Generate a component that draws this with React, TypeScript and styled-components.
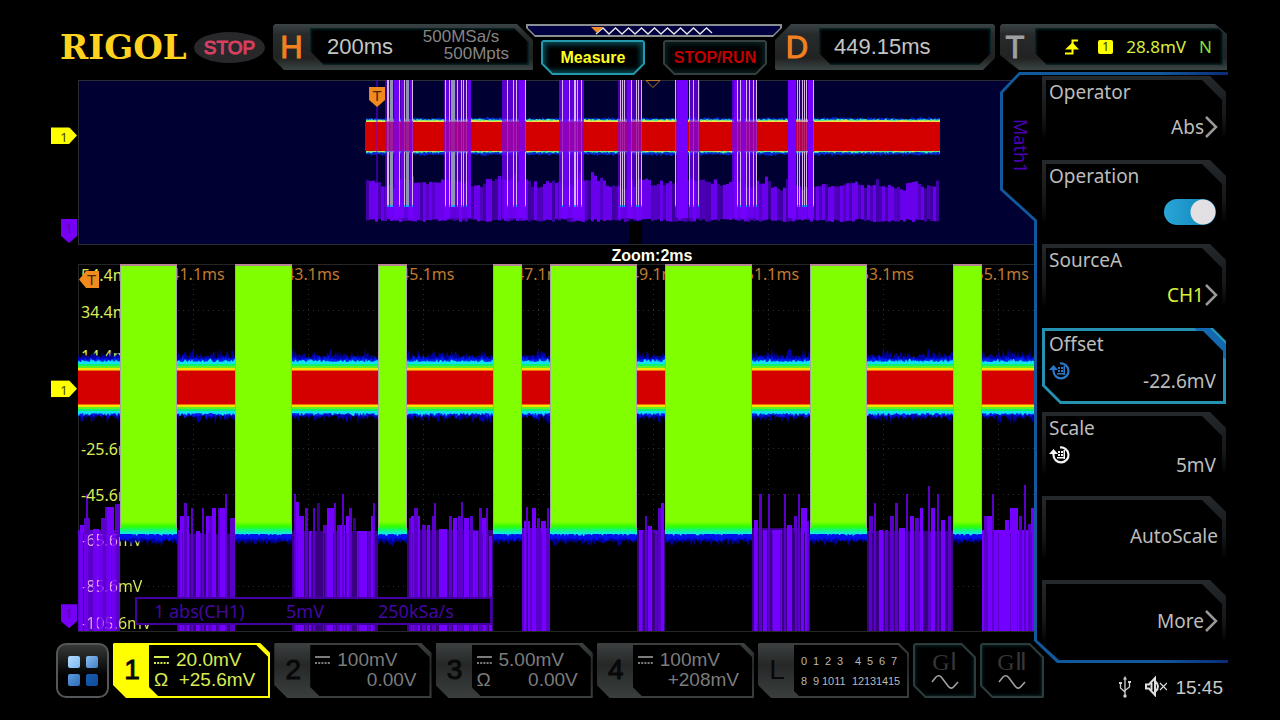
import React from "react";
import styled, { createGlobalStyle, css } from "styled-components";

const SANS = `"Liberation Sans", Arial, sans-serif`;
const HUMANIST = `"Noto Sans", "Open Sans", sans-serif`;

/* Octagonal clip with one cut length for each corner. */
const cut = (tl: number, tr: number, br: number, bl: number) =>
  `polygon(${tl}px 0, calc(100% - ${tr}px) 0, 100% ${tr}px, 100% calc(100% - ${br}px), calc(100% - ${br}px) 100%, ${bl}px 100%, 0 calc(100% - ${bl}px), 0 ${tl}px)`;

const GlobalStyle = createGlobalStyle`
  * { box-sizing: border-box; }
  body { margin: 0; background: #000; color: #c4c4c4; font-family: ${SANS}; }
  button { margin: 0; padding: 0; border: 0; background: none; color: inherit; font: inherit; cursor: pointer; }
  svg { display: block; }
`;

/* ---------- page ---------- */

const Screen = styled.div`
  min-height: 100vh;
  min-width: 1180px;
  display: flex;
  flex-direction: column;
  background: #000;
`;

const Header = styled.header`
  display: flex;
  align-items: flex-start;
  height: 72px;
  padding: 24px 53px 0 60px;
`;

const Logo = styled.div`
  flex: 0 0 134px;
  font: bold 34px/47px "DejaVu Serif", "Liberation Serif", serif;
  color: #ffd21f;
  white-space: nowrap;
`;

const RunState = styled.div`
  flex: 0 0 71px;
  height: 31px;
  margin: 8px 8px 0 0;
  border-radius: 50%;
  background: #28282b;
  color: #d84060;
  font-size: 19px;
  line-height: 32px;
  text-align: center;
  -webkit-text-stroke: 1px #d84060;
`;

/* ---------- header readouts ---------- */

const Readout = styled.section<{ $basis: number; $shape: string }>`
  flex: 1 1 ${(p) => p.$basis}px;
  display: flex;
  height: 46px;
  padding: 4px 4px 5px 0;
  clip-path: ${(p) => p.$shape};
  background: linear-gradient(180deg, #3a4346 0, #272b2c 10px, #222 34px, #3a4444 100%);
`;

const ReadoutKey = styled.div<{ $tone: string; $width: number }>`
  flex: 0 0 ${(p) => p.$width}px;
  color: ${(p) => p.$tone};
  font-size: 31px;
  line-height: 40px;
  text-align: center;
  -webkit-text-stroke: 1px ${(p) => p.$tone};
`;

const ReadoutFace = styled.div<{ $shape: string; $pad: string }>`
  flex: 1;
  display: flex;
  align-items: center;
  justify-content: space-between;
  padding: ${(p) => p.$pad};
  clip-path: ${(p) => p.$shape};
  background: #000;
  box-shadow: inset 0 0 3px 1px #0c3338;
`;

const BigValue = styled.span`
  font-size: 22px;
  line-height: 38px;
`;

const Acquisition = styled.div`
  color: #858585;
  font-size: 17px;
  line-height: 17px;
  margin-top: -3px;
  > div:last-child { padding-left: 21px; }
`;

const TriggerLevel = styled.span`
  font: 17px/36px ${HUMANIST};
  color: #d8f03c;
`;

const TriggerMode = styled(TriggerLevel)`
  color: #84e03c;
`;

const SourceBadge = styled.span`
  width: 15px;
  height: 14px;
  margin-left: 6px;
  border-radius: 2px;
  background: #ffff00;
  color: #333300;
  font: 12px/14px ${HUMANIST};
  text-align: center;
`;

const Middle = styled.div`
  flex: 0 0 256px;
  margin: 0 -7px;
  position: relative;
`;

const MemoryBar = styled.div`
  height: 13px;
  padding: 2px;
  clip-path: polygon(0 0, 100% 0, 100% 4px, calc(100% - 9px) 100%, 9px 100%, 0 4px);
  background: #8a8f92;
`;

const MemoryFill = styled.div`
  height: 9px;
  padding-left: 63px;
  clip-path: polygon(0 0, 100% 0, 100% 2px, calc(100% - 7px) 100%, 7px 100%, 0 2px);
  background: #000040;
`;

const MiddleButtons = styled.div`
  display: flex;
  gap: 18px;
  padding: 3px 15px 0;
`;

const KeyButton = styled.button<{ $on?: boolean }>`
  flex: 1;
  height: 35px;
  padding: 2px;
  clip-path: ${cut(2, 2, 11, 11)};
  background: ${(p) => (p.$on ? "#2299ac" : "#33403f")};
  color: ${(p) => (p.$on ? "#ffff20" : "#c00000")};
  font-size: 16px;
  font-weight: bold;
  > span {
    display: block;
    height: 31px;
    line-height: 31px;
    clip-path: ${cut(1, 1, 10, 10)};
    background: #000;
    box-shadow: inset 0 0 5px 3px ${(p) => (p.$on ? "#074650" : "#0a1c1e")};
  }
`;

/* ---------- body ---------- */

const Body = styled.main`
  flex: 1;
  display: flex;
  padding: 0 52px 0 78px;
`;

const Plots = styled.div`
  flex: 1;
  min-width: 0;
  display: flex;
  flex-direction: column;
  padding: 8px 0 22px;
`;

const Overview = styled.section`
  position: relative;
  height: 165px;
  border: solid #2c2c34;
  border-width: 1px 0 1px 1px;
  background: #000033;
`;

const ZoomTitle = styled.h2`
  margin: 0;
  padding-left: 192px;
  font-size: 16px;
  line-height: 21px;
  height: 19px;
  color: #fffff0;
  text-align: center;
`;

const ZoomPlot = styled.section`
  position: relative;
  flex: 1;
  min-height: 368px;
  border: solid #262626;
  border-width: 1px 0 1px 1px;
`;

const Layer = styled.svg`
  position: absolute;
  top: -1px;
  left: -1px;
  width: calc(100% + 1px);
  height: calc(100% + 2px);
`;

const LabelLayer = styled.div`
  position: absolute;
  inset: 0;
`;

const TimeLabel = styled.span`
  position: absolute;
  top: 0;
  transform: translateX(-50%);
  font: 16px/18px ${HUMANIST};
  color: #c07a30;
`;

const LevelLabel = styled.span<{ $covered?: boolean }>`
  position: absolute;
  left: 2px;
  transform: translateY(-50%);
  font: 16px/18px ${HUMANIST};
  color: #dcec58;
  ${(p) =>
    p.$covered &&
    css`
      background: linear-gradient(90deg, #e0a0f0 39px, #dcec58 39px);
      background-clip: text;
      -webkit-background-clip: text;
      color: transparent;
    `}
`;

const EdgeMarker = styled.div`
  position: absolute;
  transform: translateY(-50%);
`;

const ChannelMarker = styled(EdgeMarker)`
  left: -28px;
  width: 26px;
  height: 17px;
  clip-path: polygon(0 0, 18px 0, 100% 50%, 18px 100%, 0 100%);
  background: #ffff00;
  color: #444400;
  font: 13px/18px ${HUMANIST};
  text-align: center;
`;

const MathMarker = styled(EdgeMarker)`
  left: -18px;
  width: 16px;
  height: 24px;
  clip-path: polygon(0 0, 100% 0, 100% 17px, 50% 100%, 0 17px);
  background: #7600f4;
  color: #4a0ca8;
  font: 13px/19px ${HUMANIST};
  text-align: center;
`;

const TriggerMarker = styled.div`
  position: absolute;
  color: #4a2400;
  background: #f08a1c;
  font-size: 15px;
  text-align: center;
`;

const TriggerTop = styled(TriggerMarker)`
  top: 6px;
  left: 31%;
  margin-left: -6px;
  width: 16px;
  height: 20px;
  line-height: 17px;
  clip-path: polygon(0 0, 100% 0, 100% 13px, 50% 100%, 0 13px);
`;

const TriggerLeft = styled(TriggerMarker)`
  top: 6px;
  left: 0;
  width: 20px;
  height: 17px;
  padding-left: 5px;
  line-height: 17px;
  clip-path: polygon(7px 0, 100% 0, 100% 100%, 7px 100%, 0 50%);
`;

const MathStatus = styled.div`
  position: absolute;
  left: 56px;
  bottom: 6px;
  width: 357px;
  height: 28px;
  display: grid;
  grid-template-columns: 132px 92px auto;
  padding-left: 17px;
  border: 2px solid #4400a0;
  background: #000;
  color: #4208a0;
  font: 18px/24px ${HUMANIST};
`;

/* ---------- channel bar ---------- */

const ChannelBar = styled.footer`
  display: grid;
  grid-template-columns: 53px repeat(4, minmax(0, 1fr)) 151px 63px 64px;
  gap: 4px;
  height: 55px;
  margin: 11px -10px 0 -22px;
`;

const MenuButton = styled.button`
  display: grid;
  grid-template-columns: 12px 12px;
  gap: 6px;
  place-content: center;
  border: 2px solid #54575a;
  border-radius: 10px;
  background: linear-gradient(180deg, #363838, #000 60%);
`;

const Tile = styled.i<{ $tone: string }>`
  height: 12px;
  border-radius: 2px;
  background: ${(p) => p.$tone};
`;

const ChannelBox = styled.button<{ $on?: boolean }>`
  display: flex;
  padding: 2px;
  clip-path: ${cut(1, 10, 0, 13)};
  background: ${(p) => (p.$on ? "#ffff00" : "linear-gradient(180deg, #3c4040, #262828 40%, #3a3f3e)")};
  color: ${(p) => (p.$on ? "#d8ec50" : "#7c7c7c")};
  text-align: left;
`;

const ChannelNumber = styled.span<{ $thin?: boolean }>`
  flex: 0 0 34px;
  color: #080808;
  font-size: 28px;
  line-height: 49px;
  text-align: center;
  -webkit-text-stroke: ${(p) => (p.$thin ? 0 : 1)}px #080808;
`;

const ChannelFace = styled.span`
  flex: 1;
  display: grid;
  grid-template-columns: 22px 1fr;
  align-content: center;
  align-items: center;
  height: 51px;
  padding: 0 13px 2px 5px;
  clip-path: ${cut(0, 12, 0, 9)};
  background: #000;
  font-size: 19px;
  line-height: 20px;
`;

const Offset = styled.span`
  text-align: right;
`;

const LogicFace = styled.span`
  flex: 1;
  display: grid;
  grid-template-columns: repeat(4, 12px) 6px repeat(4, 12px);
  align-content: center;
  row-gap: 6px;
  height: 51px;
  padding-left: 3px;
  clip-path: ${cut(0, 9, 0, 5)};
  background: #000;
  color: #b8b8b8;
  font-size: 11px;
  line-height: 14px;
  > span { width: 14px; text-align: center; }
`;

const GeneratorBox = styled.button`
  padding: 2px;
  clip-path: ${cut(2, 14, 1, 12)};
  background: #2c3b3c;
  > span {
    display: flex;
    flex-direction: column;
    align-items: center;
    height: 51px;
    clip-path: ${cut(1, 13, 0, 11)};
    background: #000;
    box-shadow: inset 0 0 3px 1px #0a2426;
    color: #363636;
    font: 24px/34px "Liberation Serif", "Times New Roman", serif;
  }
  svg { margin-top: -5px; }
`;

/* ---------- side menu ---------- */

const Side = styled.aside`
  flex: 0 0 228px;
  margin-left: -34px;
  display: flex;
  flex-direction: column;
  position: relative;
`;

const Panel = styled.div`
  position: relative;
  height: 591px;
  display: flex;
  padding: 4px 2px 0 0;
  isolation: isolate;
  &::before,
  &::after {
    content: "";
    position: absolute;
    inset: 0;
    z-index: -1;
    background: linear-gradient(90deg, #12589c 70%, #0a2c78);
    clip-path: polygon(100% 0, 19px 0, 0 20px, 0 118px, 34px 149px, 34px 569px, 57px 100%, 100% 100%);
  }
  &::after {
    inset: 3px 0 3px 3px;
    background: #000;
    clip-path: polygon(100% 0, 17px 0, 0 18px, 0 114px, 34px 145px, 34px 565px, 56px 100%, 100% 100%);
  }
`;

const PanelTab = styled.h3`
  flex: 0 0 42px;
  margin: 0;
  padding: 43px 5px 0 0;
  writing-mode: vertical-rl;
  font: 18px/32px ${HUMANIST};
  color: #4c00b4;
`;

const MenuList = styled.div`
  flex: 1;
  display: flex;
  flex-direction: column;
  gap: 8px;
`;

const itemFrame = css<{ $selected?: boolean }>`
  position: relative;
  display: flex;
  flex-direction: column;
  height: 76px;
  padding: 6px 10px 0 7px;
  isolation: isolate;
  text-align: left;
  clip-path: ${(p) => (p.$selected ? cut(0, 13, 0, 18) : cut(0, 16, 0, 16))};
  background: ${(p) =>
    p.$selected
      ? "linear-gradient(225deg, #2596b4 11px, #1468b0 12px, #1468b0 22px, #2492b0 23px)"
      : "linear-gradient(180deg, #25292c, #14181a 40px, #000 64px)"};
  font: 19px/20px ${HUMANIST};
  color: #bcbcbc;
  &::before {
    content: "";
    position: absolute;
    inset: ${(p) => (p.$selected ? "3px" : "4px 4px 0 4px")};
    z-index: -1;
    clip-path: ${(p) => (p.$selected ? cut(0, 20, 0, 16) : cut(0, 20, 0, 0))};
    background: #000;
  }
`;

const MenuItem = styled.button<{ $selected?: boolean }>`
  ${itemFrame}
`;

const MenuToggle = styled.label`
  ${itemFrame}
  cursor: pointer;
`;

const ItemLabel = styled.span`
  height: 34px;
`;

const ItemValue = styled.span<{ $tone?: string; $mid?: boolean }>`
  display: flex;
  align-items: center;
  align-self: flex-end;
  margin: ${(p) => (p.$mid ? "24px -2px 0 0" : "0 -2px 0 0")};
  color: ${(p) => p.$tone ?? "inherit"};
`;

const KnobRow = styled.span`
  display: flex;
  justify-content: space-between;
  align-items: flex-start;
  margin-top: -7px;
  > span { padding-top: 10px; }
`;

const Switch = styled.input`
  appearance: none;
  align-self: flex-end;
  width: 52px;
  height: 26px;
  margin: -1px 0 0;
  border-radius: 13px;
  background: radial-gradient(circle 13px at 39px 50%, #e2e0e2 12px, #0000 13px), linear-gradient(90deg, #2aa6d8, #0c80b4);
`;

const StatusRow = styled.div`
  flex: 1;
  display: flex;
  align-items: flex-start;
  justify-content: flex-end;
  gap: 8px;
  padding: 12px 5px 0 0;
  > svg:first-child { margin-right: 6px; }
`;

const Clock = styled.time`
  font-size: 19px;
  line-height: 26px;
  color: #c8c8c8;
`;

/* ---------- trace data ---------- */

const makeRandom = (seed: number) => () => {
  seed = (seed * 1664525 + 1013904223) % 4294967296;
  return seed / 4294967296;
};

/* Closed outline whose top and bottom edges carry noise of the given size. */
const noisyBand = (x0: number, x1: number, top: number, bottom: number, topAmp: number, bottomAmp: number, seed: number) => {
  const rnd = makeRandom(seed);
  const up: string[] = [];
  const down: string[] = [];
  for (let x = x0; x <= x1; x += 1) {
    up.push(`${x},${(top - rnd() * rnd() * topAmp).toFixed(1)}`);
    down.unshift(`${x},${(bottom + rnd() * rnd() * bottomAmp).toFixed(1)}`);
  }
  return [...up, ...down].join(" ");
};

const BURSTS: [number, number][] = [
  [120, 177], [235, 292], [378, 407], [493, 522], [550, 637], [665, 752], [810, 867], [953, 982],
];
const IDLE: [number, number][] = [
  [78, 120], [177, 235], [292, 378], [407, 493], [522, 550], [637, 665], [752, 810], [867, 953], [982, 1034],
];

/* Steps of the math trace: [start, width, top, shade]; 2 is brightest. */
type Step = [number, number, number, number];
const SHADES = ["#3a0084", "#5a00c8", "#7400ff"];
const HAND_STEPS: Step[] = [
  [78, 42, 530, 1], [80, 5, 525, 2], [86, 2, 494, 1], [84, 2, 518, 1], [88, 2, 518, 1], [93, 6, 529, 2], [101, 4, 518, 1], [105, 3, 507, 1], [107, 7, 507, 2], [115, 5, 504, 1],
  [177, 58, 534, 0], [178, 3, 530, 1], [180, 9, 516, 2], [184, 3, 503, 1], [191, 2, 508, 1], [196, 4, 531, 2], [202, 2, 508, 1], [206, 3, 516, 2], [209, 3, 516, 1], [212, 4, 508, 2], [218, 3, 508, 1], [220, 6, 508, 2], [225, 2, 494, 1], [230, 5, 518, 1],
  [292, 86, 531, 0], [294, 2, 494, 1], [296, 3, 502, 2], [299, 5, 516, 2], [305, 3, 508, 1], [309, 3, 531, 2], [313, 2, 508, 1], [317, 3, 503, 0], [323, 4, 525, 1], [327, 7, 508, 2], [334, 2, 503, 1], [337, 3, 525, 1], [340, 5, 525, 2], [342, 2, 494, 1], [346, 3, 516, 2], [349, 3, 508, 1], [353, 3, 518, 0], [357, 10, 531, 2], [368, 3, 531, 1], [371, 4, 516, 2], [373, 2, 503, 1],
  [407, 86, 530, 0], [409, 3, 518, 1], [411, 9, 516, 2], [414, 4, 508, 1], [422, 4, 525, 1], [427, 3, 525, 2], [432, 3, 516, 1], [434, 2, 503, 1], [439, 8, 529, 2], [449, 3, 516, 1], [453, 4, 518, 2], [458, 3, 516, 1], [461, 2, 502, 1], [464, 5, 518, 2], [470, 3, 516, 1], [473, 5, 531, 2], [479, 3, 508, 1], [482, 4, 518, 2], [486, 2, 508, 1], [489, 3, 536, 2],
  [522, 28, 528, 1], [524, 6, 521, 2], [526, 2, 507, 1], [532, 4, 508, 2], [537, 3, 518, 1], [541, 5, 521, 2], [547, 2, 508, 1],
  [637, 28, 530, 0], [639, 4, 530, 2], [645, 2, 516, 1], [648, 4, 526, 2], [654, 3, 530, 1], [658, 4, 508, 1], [661, 3, 503, 2],
  [752, 58, 528, 0], [754, 4, 520, 2], [759, 3, 494, 1], [763, 4, 530, 2], [768, 2, 494, 1], [772, 10, 530, 2], [784, 2, 494, 1], [787, 5, 525, 2], [794, 3, 516, 1], [798, 2, 494, 1], [801, 6, 508, 2], [807, 2, 521, 1],
  [867, 86, 531, 0], [869, 4, 516, 1], [874, 2, 503, 1], [879, 4, 530, 2], [885, 3, 530, 1], [890, 4, 516, 1], [895, 3, 503, 1], [899, 6, 528, 2], [906, 2, 494, 1], [910, 4, 516, 2], [915, 4, 518, 1], [920, 3, 508, 2], [928, 2, 486, 1], [931, 4, 508, 2], [937, 2, 494, 1], [941, 4, 520, 2], [948, 3, 516, 1],
  [982, 52, 530, 2], [984, 3, 516, 1], [987, 5, 516, 2], [992, 2, 494, 1], [1005, 4, 520, 2], [1010, 8, 508, 2], [1024, 2, 485, 1], [1019, 3, 516, 1], [1028, 3, 524, 1], [1031, 3, 508, 2],
];

const rndFill = makeRandom(77);
const STRIPES: Step[] = IDLE.flatMap(([a, b]) => {
  const out: Step[] = [];
  for (let x = a + 5; x < b - 2; x += 7 + Math.floor(rndFill() * 9)) {
    out.push([x, 1, 533, a === 982 ? 1 : Math.floor(rndFill() * 2)]);
  }
  return out;
});

const rndMath = makeRandom(21);
let mathTop = 184;
const OVERVIEW_MATH = Array.from({ length: 191 }, (_, i) => {
  if (i % 5 === 0) mathTop = 177 + rndMath() * 10;
  return {
    x: 366 + i * 3,
    top: mathTop + rndMath() * 4 - (rndMath() > 0.93 ? 6 : 0),
    bottom: 219 + rndMath() * 3,
    alpha: rndMath() > 0.5 ? 0.9 : 0.5 + rndMath() * 0.25,
  };
});

/* Bursts in the overview: purple columns [x, width, alpha] and pale lines [x, width]. */
const COLUMNS: [number, number, number][] = [
  [376, 2, 0.45], [385, 28, 0.55], [394, 5, 0.9], [401, 3, 0.9], [410, 3, 0.8],
  [444, 27, 0.6], [446, 3, 0.6], [468, 3, 0.8], [502, 24, 0.75], [519, 7, 1],
  [559, 25, 0.8], [563, 5, 0.7], [618, 24, 0.6], [627, 4, 0.9], [675, 2, 0.6], [677, 11, 1], [689, 11, 0.7],
  [732, 25, 0.7], [734, 3, 0.9], [741, 4, 0.9], [788, 8, 1], [796, 12, 0.3], [808, 6, 1],
];
const LINES: [number, number][] = [
  [387, 2], [390, 3], [399, 1], [404, 1], [406, 3], [412, 1],
  [445, 1], [449, 1], [451, 4], [457, 1], [461, 1], [463, 1], [466, 1],
  [507, 1], [513, 1], [516, 1], [525, 1],
  [562, 1], [569, 1], [574, 2], [577, 1], [581, 1],
  [620, 1], [622, 1], [624, 1], [631, 1], [636, 1], [638, 1], [641, 1],
  [675, 1], [689, 1], [693, 1], [698, 1],
  [737, 1], [740, 1], [746, 1], [749, 1], [753, 1], [756, 1],
  [797, 1], [799, 1], [802, 1], [804, 1], [806, 1], [813, 1],
];

const TIMES = ["441.1ms", "443.1ms", "445.1ms", "447.1ms", "449.1ms", "451.1ms", "453.1ms", "455.1ms"];
const LEVELS: [string, number, boolean][] = [
  ["54.4mV", 10, false], ["34.4mV", 47, false], ["14.4mV", 91, false], ["-25.6mV", 185, false],
  ["-45.6mV", 231, false], ["-65.6mV", 277, true], ["-85.6mV", 323, true], ["-105.6mV", 360, true],
];

/* ---------- traces ---------- */

const OverviewTrace = () => (
  <Layer viewBox="78 80 956 165" preserveAspectRatio="none" aria-hidden="true">
    <polygon points={noisyBand(366, 940, 119, 154, 3, 3, 5)} fill="#0028d0" />
    <polygon points={noisyBand(366, 940, 120, 152, 2, 2, 8)} fill="#30e8b0" />
    <polygon points={noisyBand(366, 940, 121, 151, 2, 2, 9)} fill="#f0e040" />
    <rect x="365" y="122" width="575" height="29" fill="#d40000" />
    {OVERVIEW_MATH.map((m) => (
      <rect key={m.x} x={m.x} y={m.top} width="3" height={m.bottom - m.top} fill="#7400ff" opacity={m.alpha} />
    ))}
    {COLUMNS.map(([x, w, a]) => (
      <rect key={`${x}-${w}`} x={x} y="80" width={w} height={x === 376 ? 140 : 138} fill="#7400ff" opacity={a} />
    ))}
    {COLUMNS.filter(([, w]) => w > 20).map(([x, w]) => (
      <rect key={x} x={x} y="122" width={w} height="29" fill="#a00090" opacity="0.45" />
    ))}
    {LINES.map(([x, w]) => (
      <g key={x} fill={w > 2 ? "#8f93b4" : "#d6b6e4"}>
        <rect x={x} y="80" width={w} height="41" />
        <rect x={x} y="121" width={w} height="31" opacity="0.2" />
        <rect x={x} y="152" width={w} height="53" />
        <rect x={x} y="205" width={w} height="2" fill="#20a0ff" />
      </g>
    ))}
    <rect x="629" y="222" width="13" height="22" fill="#000" />
    <path d="M646 80.500H660L653 87.500Z" fill="#000030" stroke="#c07828" />
  </Layer>
);

const GridAndMath = () => (
  <Layer viewBox="78 264 956 368" preserveAspectRatio="none" aria-hidden="true">
    <g stroke="#2c2c28" strokeDasharray="1 4">
      {[310, 356, 402, 448, 494, 540, 586].map((y) => (
        <path key={y} d={`M78 ${y}.5H1034`} />
      ))}
      {[193, 308, 423, 538, 653, 768, 883, 998].map((x) => (
        <path key={x} d={`M${x}.5 264V632`} />
      ))}
    </g>
    {[...HAND_STEPS.filter((s) => s[1] > 20), ...HAND_STEPS.filter((s) => s[1] <= 20), ...STRIPES].map(([x, w, y, s], i) => (
      <rect key={i} x={x} y={y} width={w} height={631 - y} fill={SHADES[s]} />
    ))}
  </Layer>
);

const SignalTrace = () => (
  <Layer viewBox="78 264 956 368" preserveAspectRatio="none" aria-hidden="true">
    <defs>
      <linearGradient id="burst" x1="0" y1="264" x2="0" y2="534" gradientUnits="userSpaceOnUse">
        <stop offset="0.955" stopColor="#80ff00" />
        <stop offset="0.972" stopColor="#30ff00" />
        <stop offset="0.985" stopColor="#10f878" />
        <stop offset="1" stopColor="#10e8f0" />
      </linearGradient>
    </defs>
    {[79, 84, 93, 99, 106, 112].map((x) => (
      <rect key={x} x={x} y="534" width="4" height="97" fill="#7000f0" opacity="0.8" />
    ))}
    {IDLE.map(([a, b]) => (
      <g key={a}>
        <polygon points={noisyBand(a, b, 358, 415, 12, 11, a)} fill="#0000a8" />
        <polygon points={noisyBand(a, b, 360, 414, 6, 6, a + 1)} fill="#0020f0" />
        <polygon points={noisyBand(a, b, 362, 413, 4, 4, a + 2)} fill="#10e0f0" />
        <rect x={a} y="364" width={b - a} height="47" fill="#10f070" />
        <rect x={a} y="366" width={b - a} height="43" fill="#60f020" />
        <rect x={a} y="368" width={b - a} height="39" fill="#f8e000" />
        <rect x={a} y="370" width={b - a} height="35" fill="#f07000" />
        <rect x={a} y="371" width={b - a} height="33" fill="#d40000" />
      </g>
    ))}
    {BURSTS.map(([a, b]) => (
      <g key={a}>
        <polygon points={noisyBand(a, b, 500, 540, 0, 8, a + 4)} fill="#0000a0" />
        <polygon points={noisyBand(a, b, 500, 538, 0, 5, a + 5)} fill="#0010e8" />
        <polygon points={noisyBand(a, b, 500, 533, 0, 4, a + 6)} fill="#10e0f0" />
        <rect x={a} y="264" width={b - a} height="270" fill="url(#burst)" />
        <rect x={a} y="264" width={b - a} height="2" fill="#b88498" />
        <rect x={a} y="266" width="1" height="262" fill="#a0a8a0" />
        <rect x={b - 1} y="266" width="1" height="262" fill="#a8a0b0" />
      </g>
    ))}
  </Layer>
);

/* ---------- icons ---------- */

const Chevron = () => (
  <svg width="14" height="22" viewBox="0 0 14 22" fill="none" stroke="#989898" strokeWidth="2.500" aria-hidden="true">
    <path d="M2 1L12 11L2 21" />
  </svg>
);

const KnobIcon = ({ tone }: { tone: string }) => (
  <svg width="22" height="20" viewBox="0 0 22 20" aria-hidden="true">
    <path d="M11 2.500A7.500 7.500 0 1 1 4.500 10V7.500" fill="none" stroke={tone} strokeWidth="2.200" />
    <path d="M0 9L4.500 4L9 9Z" fill={tone} />
    <path d="M9 6h2v2H9zM12 6h2v2h-2zM9 9h2v2H9zM12 9h2v2h-2zM14.500 5h1.500v9h-1.500zM8 12h8v1.500H8z" fill={tone} />
  </svg>
);

const CouplingIcon = () => (
  <svg width="15" height="12" viewBox="0 0 15 12" fill="none" stroke="currentColor" aria-hidden="true">
    <path d="M0 3H15" strokeWidth="2" />
    <path d="M0 9H15" strokeWidth="2" strokeDasharray="2 1.200" />
  </svg>
);

const EdgeIcon = () => (
  <svg width="14" height="16" viewBox="0 0 14 16" aria-hidden="true">
    <path d="M0 14.500H7.500V1.500H13" fill="none" stroke="#ffff00" strokeWidth="2" />
    <path d="M0 10.500L7.500 3.500L14 10.500Z" fill="#ffff00" />
  </svg>
);

const SineIcon = () => (
  <svg width="28" height="16" viewBox="0 0 28 16" fill="none" stroke="#a0a0a0" strokeWidth="1.600" aria-hidden="true">
    <path d="M1 8L5 3Q8 0 11 4L17 12Q20 16 23 12.500L27 8" />
  </svg>
);

const UsbIcon = () => (
  <svg width="12" height="24" viewBox="0 0 12 24" fill="none" stroke="#d0d0d0" strokeWidth="1.300" aria-hidden="true">
    <path d="M6 3V20M6 17L1.500 13V8M6 15.500L10.500 12V7.500" />
    <path d="M6 1L8 4.500H4Z" fill="#d0d0d0" stroke="none" />
    <circle cx="6" cy="21" r="1.700" fill="#d0d0d0" stroke="none" />
    <path d="M0 7h3v2H0zM9 6h3v2H9z" fill="#d0d0d0" stroke="none" />
  </svg>
);

const MuteIcon = () => (
  <svg width="22" height="22" viewBox="0 0 22 22" fill="none" stroke="#e0e0e0" strokeWidth="2" aria-hidden="true">
    <path d="M1 9.500H4L10 3V20L4 13.500H1Z" />
    <path d="M6.500 8V15M10 6Q13 8.500 13 11.500T10 17" />
    <path d="M15 8L22 15M22 8L15 15" strokeWidth="1.200" />
  </svg>
);

const MemoryWave = () => (
  <svg width="124" height="9" viewBox="0 0 124 9" aria-hidden="true">
    <path d="M5 8L12 2L18 8L24.500 2L31 8L37.500 2L44 8L50.500 2L57 8L63.500 2L70 8L76.500 2L83 8L89.500 2L96 8L102.500 2L109 8L115.500 2L121 7" fill="none" stroke="#e8e8e8" strokeWidth="1.300" />
    <path d="M0 1H12L6 7Z" fill="#f08c28" />
  </svg>
);

/* ---------- app ---------- */

interface Channel {
  id: string;
  scale: string;
  offset: string;
  ohm?: boolean;
  on?: boolean;
}

const CHANNELS: Channel[] = [
  { id: "1", scale: "20.0mV", offset: "+25.6mV", ohm: true, on: true },
  { id: "2", scale: "100mV", offset: "0.00V" },
  { id: "3", scale: "5.00mV", offset: "0.00V", ohm: true },
  { id: "4", scale: "100mV", offset: "+208mV" },
];

const DIGITAL = ["0", "1", "2", "3", "", "4", "5", "6", "7", "8", "9", "10", "11", "", "12", "13", "14", "15"];

export default function App() {
  return (
    <Screen>
      <GlobalStyle />
      <Header>
        <Logo>RIGOL</Logo>
        <RunState>STOP</RunState>
        <Readout $basis={260} $shape={cut(2, 16, 1, 11)}>
          <ReadoutKey $tone="#f08020" $width={37}>H</ReadoutKey>
          <ReadoutFace $shape={cut(0, 15, 0, 14)} $pad="0 20px 0 17px">
            <BigValue>200ms</BigValue>
            <Acquisition>
              <div>500MSa/s</div>
              <div>500Mpts</div>
            </Acquisition>
          </ReadoutFace>
        </Readout>
        <Middle>
          <MemoryBar>
            <MemoryFill>
              <MemoryWave />
            </MemoryFill>
          </MemoryBar>
          <MiddleButtons>
            <KeyButton $on><span>Measure</span></KeyButton>
            <KeyButton><span>STOP/RUN</span></KeyButton>
          </MiddleButtons>
        </Middle>
        <Readout $basis={220} $shape={cut(16, 2, 12, 1)}>
          <ReadoutKey $tone="#f08020" $width={44}>D</ReadoutKey>
          <ReadoutFace $shape={cut(0, 0, 12, 12)} $pad="0 0 0 15px">
            <BigValue>449.15ms</BigValue>
          </ReadoutFace>
        </Readout>
        <Readout $basis={232} $shape={`polygon(7px 0, calc(100% - 12px) 0, 100% 10px, 100% 100%, 24px 100%, 5px 31px, 5px 2px)`}>
          <ReadoutKey $tone="#a0a0a0" $width={40}>T</ReadoutKey>
          <ReadoutFace $shape={cut(0, 5, 0, 12)} $pad="0 11px 0 30px">
            <EdgeIcon />
            <SourceBadge>1</SourceBadge>
            <TriggerLevel>28.8mV</TriggerLevel>
            <TriggerMode>N</TriggerMode>
          </ReadoutFace>
        </Readout>
      </Header>

      <Body>
        <Plots>
          <Overview aria-label="Overview">
            <OverviewTrace />
            <TriggerTop>T</TriggerTop>
            <ChannelMarker style={{ top: "33.5%" }}>1</ChannelMarker>
            <MathMarker style={{ top: "92%" }}>1</MathMarker>
          </Overview>
          <ZoomTitle>Zoom:2ms</ZoomTitle>
          <ZoomPlot aria-label="Zoomed waveform">
            <GridAndMath />
            <LabelLayer>
              {TIMES.map((t, i) => (
                <TimeLabel key={t} style={{ left: `${11.93 + i * 12.03}%` }}>{t}</TimeLabel>
              ))}
              {LEVELS.map(([text, y, covered]) => (
                <LevelLabel key={text} $covered={covered} style={{ top: `${(y / 368) * 100}%` }}>{text}</LevelLabel>
              ))}
            </LabelLayer>
            <SignalTrace />
            <TriggerLeft>T</TriggerLeft>
            <MathStatus>
              <span>1 abs(CH1)</span>
              <span>5mV</span>
              <span>250kSa/s</span>
            </MathStatus>
            <ChannelMarker style={{ top: "33.8%" }}>1</ChannelMarker>
            <MathMarker style={{ top: "96%" }}>1</MathMarker>
          </ZoomPlot>
          <ChannelBar>
            <MenuButton aria-label="Menu">
              <Tile $tone="linear-gradient(135deg, #b4dcff, #7cb8f0)" />
              <Tile $tone="linear-gradient(135deg, #8cbcf0, #4080c8)" />
              <Tile $tone="linear-gradient(135deg, #5c9ce0, #2c6cb8)" />
              <Tile $tone="linear-gradient(135deg, #1c5cac, #0c4c9c)" />
            </MenuButton>
            {CHANNELS.map((c) => (
              <ChannelBox key={c.id} $on={c.on}>
                <ChannelNumber>{c.id}</ChannelNumber>
                <ChannelFace>
                  <CouplingIcon />
                  <span>{c.scale}</span>
                  <span>{c.ohm ? "Ω" : ""}</span>
                  <Offset>{c.offset}</Offset>
                </ChannelFace>
              </ChannelBox>
            ))}
            <ChannelBox>
              <ChannelNumber $thin>L</ChannelNumber>
              <LogicFace>
                {DIGITAL.map((d, i) => <span key={i}>{d}</span>)}
              </LogicFace>
            </ChannelBox>
            <GeneratorBox><span>GⅠ<SineIcon /></span></GeneratorBox>
            <GeneratorBox><span>GⅡ<SineIcon /></span></GeneratorBox>
          </ChannelBar>
        </Plots>

        <Side>
          <Panel>
            <PanelTab>Math1</PanelTab>
            <MenuList>
              <MenuItem>
                <ItemLabel>Operator</ItemLabel>
                <ItemValue>Abs<Chevron /></ItemValue>
              </MenuItem>
              <MenuToggle>
                <ItemLabel>Operation</ItemLabel>
                <Switch type="checkbox" defaultChecked />
              </MenuToggle>
              <MenuItem>
                <ItemLabel>SourceA</ItemLabel>
                <ItemValue $tone="#d8f03c">CH1<Chevron /></ItemValue>
              </MenuItem>
              <MenuItem $selected>
                <ItemLabel>Offset</ItemLabel>
                <KnobRow><KnobIcon tone="#2c78c8" /><span>-22.6mV</span></KnobRow>
              </MenuItem>
              <MenuItem>
                <ItemLabel>Scale</ItemLabel>
                <KnobRow><KnobIcon tone="#f4f4f4" /><span>5mV</span></KnobRow>
              </MenuItem>
              <MenuItem>
                <ItemValue $mid>AutoScale</ItemValue>
              </MenuItem>
              <MenuItem>
                <ItemValue $mid>More<Chevron /></ItemValue>
              </MenuItem>
            </MenuList>
          </Panel>
          <StatusRow>
            <UsbIcon />
            <MuteIcon />
            <Clock>15:45</Clock>
          </StatusRow>
        </Side>
      </Body>
    </Screen>
  );
}
